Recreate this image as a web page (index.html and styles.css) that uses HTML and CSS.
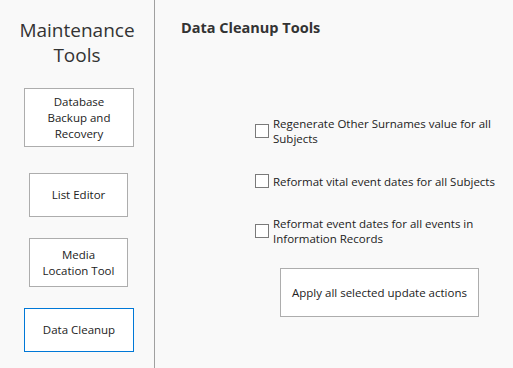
FILE: index.html
```html
<!DOCTYPE html>
<html lang="en">
<head>
    <meta charset="UTF-8">
    <title>Maintenance Tools</title>
    <link rel="stylesheet" href="styles.css">
</head>
<body>
    <div class="window">
        <aside class="sidebar">
            <h1 class="sidebar-title">Maintenance<br>Tools</h1>
            <button class="tool-button backup">Database<br>Backup and<br>Recovery</button>
            <button class="tool-button list">List Editor</button>
            <button class="tool-button media">Media<br>Location Tool</button>
            <button class="tool-button cleanup active">Data Cleanup</button>
        </aside>
        <main class="content">
            <h2 class="content-title">Data Cleanup Tools</h2>
            <div class="options">
                <label class="option">
                    <input type="checkbox">
                    <span>Regenerate Other Surnames value for all Subjects</span>
                </label>
                <label class="option">
                    <input type="checkbox">
                    <span>Reformat vital event dates for all Subjects</span>
                </label>
                <label class="option">
                    <input type="checkbox">
                    <span>Reformat event dates for all events in Information Records</span>
                </label>
            </div>
            <button class="apply-button">Apply all selected update actions</button>
        </main>
    </div>
</body>
</html>
```

FILE: styles.css
```css
body {
    margin: 0;
    background-color: #f9f9f9;
    font-family: 'Open Sans', 'Noto Sans', sans-serif;
    color: #222;
}
.window {
    display: flex;
    height: 368px;
}
.sidebar {
    width: 154px;
    border-right: 1px solid #a0a0a0;
    display: flex;
    flex-direction: column;
}
.sidebar-title {
    margin: 18px 0 0;
    font-size: 19px;
    font-weight: 400;
    line-height: 25px;
    text-align: center;
    color: #333;
}
.tool-button {
    font-family: inherit;
    font-size: 11.5px;
    line-height: 16px;
    color: #222;
    background-color: #fff;
    border: 1px solid #adadad;
    padding: 0;
    cursor: pointer;
}
.backup {
    width: 110px;
    height: 59px;
    margin: 20px 0 0 24px;
}
.list {
    width: 99px;
    height: 44px;
    margin: 26px 0 0 29px;
}
.media {
    width: 99px;
    height: 49px;
    margin: 21px 0 0 29px;
}
.cleanup {
    width: 110px;
    height: 44px;
    margin: 21px 0 0 24px;
}
.active {
    border-color: #0078d7;
}
.content {
    flex: 1;
    padding: 0 0 0 26px;
}
.content-title {
    margin: 18px 0 0;
    font-size: 14.5px;
    font-weight: 700;
    line-height: 20px;
    color: #333;
}
.options {
    display: flex;
    flex-direction: column;
    gap: 20px;
    margin: 78px 0 0 74px;
    width: 255px;
}
.option {
    display: flex;
    align-items: center;
    gap: 4px;
    min-height: 30px;
    font-size: 11.5px;
    line-height: 15px;
    cursor: pointer;
}
.option input {
    appearance: none;
    flex: none;
    width: 14px;
    height: 14px;
    margin: 0;
    background-color: #fff;
    border: 1px solid #7a7a7a;
}
.apply-button {
    display: block;
    width: 199px;
    height: 49px;
    margin: 22px 0 0 99px;
    font-family: inherit;
    font-size: 11.5px;
    color: #222;
    background-color: #fff;
    border: 1px solid #adadad;
    cursor: pointer;
}
```
